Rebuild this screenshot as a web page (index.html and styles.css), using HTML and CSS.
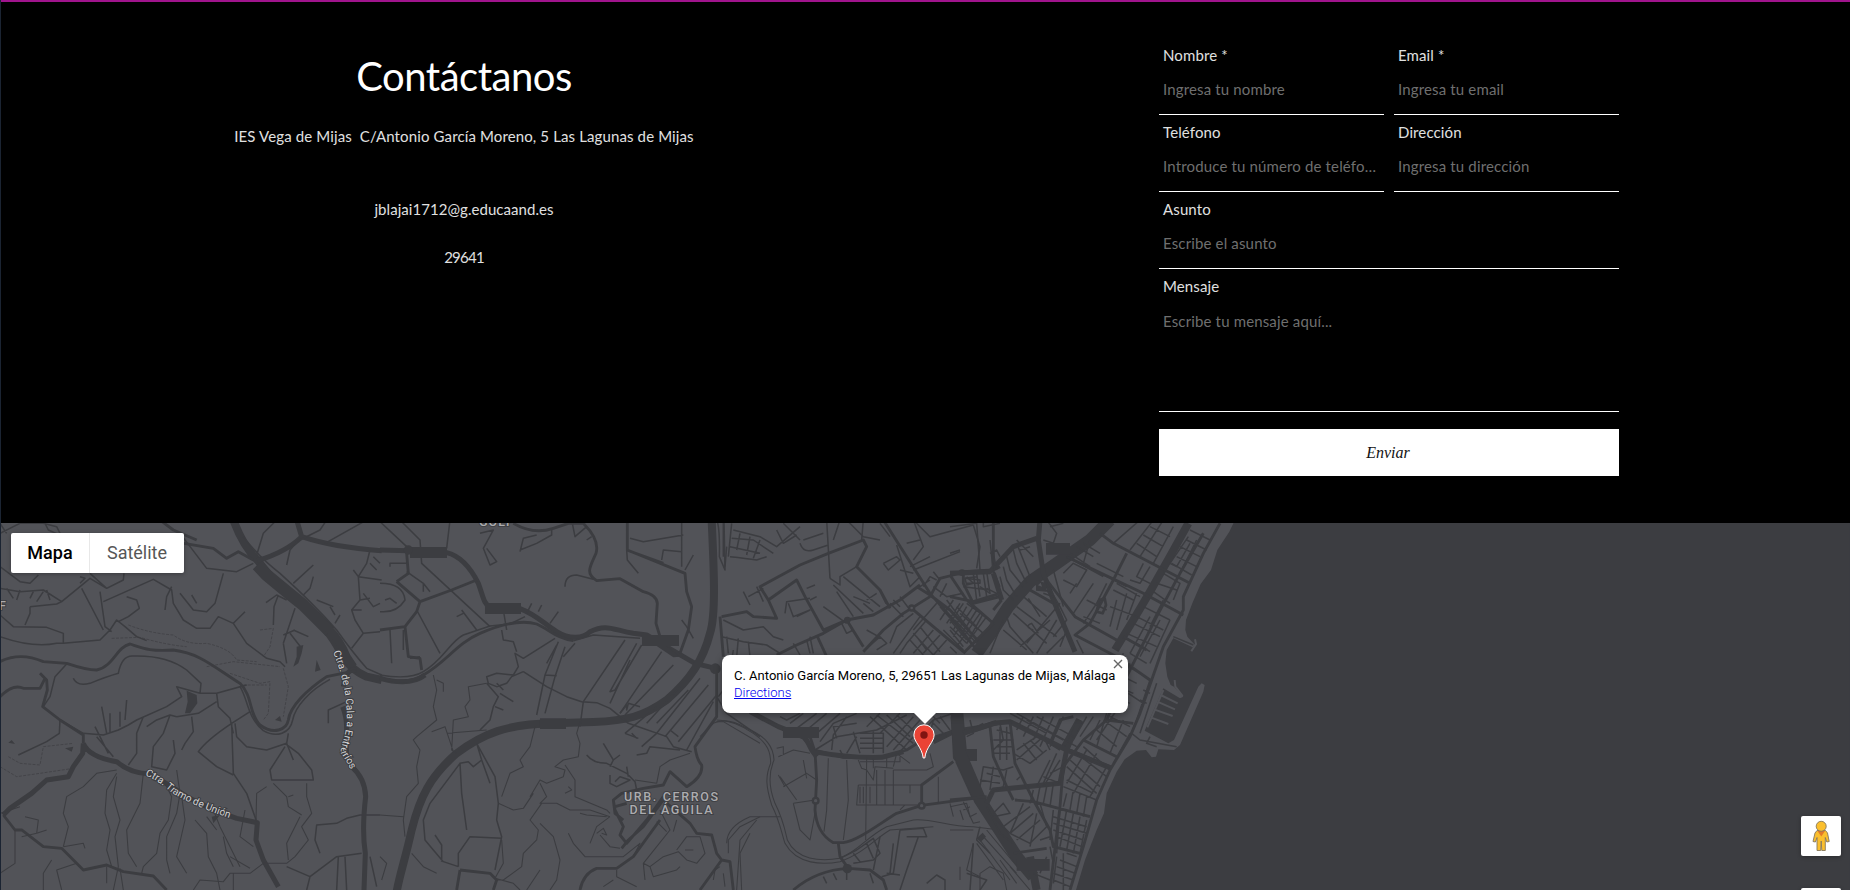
FILE: index.html
```html
<!DOCTYPE html>
<html lang="es">
<head>
<meta charset="utf-8">
<title>Contáctanos</title>
<link rel="stylesheet" href="styles.css">
</head>
<body>
<main class="page">
  <section class="contact">
    <div class="info">
      <h1 class="title">Contáctanos</h1>
      <p class="address">IES Vega de Mijas&nbsp; C/Antonio García Moreno, 5 Las Lagunas de Mijas</p>
      <p class="mail">jblajai1712@g.educaand.es</p>
      <p class="zip">29641</p>
    </div>
    <form class="form">
      <label class="field"><span class="label">Nombre *</span><input class="input" placeholder="Ingresa tu nombre"></label>
      <label class="field"><span class="label">Email *</span><input class="input" placeholder="Ingresa tu email"></label>
      <label class="field"><span class="label">Teléfono</span><input class="input" placeholder="Introduce tu número de teléfono"></label>
      <label class="field"><span class="label">Dirección</span><input class="input" placeholder="Ingresa tu dirección"></label>
      <label class="field wide"><span class="label">Asunto</span><input class="input" placeholder="Escribe el asunto"></label>
      <label class="field wide"><span class="label">Mensaje</span><textarea class="input area" placeholder="Escribe tu mensaje aquí..."></textarea></label>
      <button class="send wide" type="button">Enviar</button>
    </form>
  </section>

  <section class="map">
    <svg class="canvas" viewBox="0 523 1850 367" width="1850" height="367">
      <rect class="land" x="0" y="523" width="1850" height="367"/>

      <!-- sea and harbour -->
      <g transform="translate(950 520) scale(.33333)">
        <path class="sea" d="M855 0L838 35L802 90L783 150L752 192L727 250L708 300L706 330L712 350L735 375L728 382L670 355L650 390L646 430L652 470L662 495L672 500L700 530L690 535L640 505L584 632L655 670L672 660L745 500L755 490L764 495L760 515L690 675L672 690L625 688L618 710L605 712L588 690L560 692L524 718L500 755L470 820L462 880L440 930L405 1020L378 1110H2700V0Z"/>
        <path class="pier" d="M735 358L738 372L724 394M674 480L676 500L698 528M632 525L683 550M622 545L675 568M612 568L668 588M602 592L655 612M640 510L592 622"/>
      </g>

      <!-- west -->
      <g class="road" transform="translate(0 520) scale(.33333)">
        <path class="w1" d="M700 0Q730 80 772 120Q830 200 900 250Q990 330 1020 395Q1050 450 1100 470L1145 480"/>
        <path class="w1 fat" d="M772 135L800 165Q860 215 910 255L990 335"/>
        <path class="w1" d="M985 325Q1020 360 1040 410L1060 440"/>
        <path class="w4" d="M730 50Q780 115 840 160Q940 250 1010 330Q1060 400 1100 445L1145 465"/>
        <path class="w2" d="M772 122Q860 95 905 50L890 0M905 50Q1000 82 1145 92"/>
        <path class="w2" d="M1068 452Q1040 440 1030 500M1055 740Q1095 775 1097 830Q1085 930 1096 1000L1092 1110M1028 560Q1045 600 1038 660L1040 710L1055 740"/>
        <path class="w2" d="M250 670Q265 710 350 725Q390 760 450 762Q500 790 560 830L640 870L710 895L772 908L768 960L790 1020L835 1100M250 670L248 700L220 740L205 770L140 780L95 820L30 865L10 885"/>
        <path class="w3" d="M10 885L45 930L65 930L130 980L185 985L250 1050L320 1035L370 1055L460 1068L500 1110"/>
        <path class="w3" d="M0 425Q60 395 130 425L200 430Q260 450 290 450C340 440 350 380 390 372C430 385 450 395 520 390C600 400 640 440 720 490C760 530 745 580 780 615C820 645 860 630 865 600C870 560 920 510 980 470L1068 452"/>
        <path class="w4" d="M720 500C745 540 740 590 790 632C830 655 870 640 878 600C885 560 930 510 990 478"/>
        <path class="w3" d="M0 530Q40 490 70 505L120 505L135 475M120 460L140 480L142 510L128 560L180 600L250 645V670M552 70L640 85L680 115L715 95L760 120M480 0L520 30L590 60"/>
        <path class="w4" d="M0 40L40 20L60 10L130 10L170 20L190 60M0 140L60 185L90 190L115 165M0 205L60 215L130 210L185 245L240 200L270 175L320 205L370 180L372 160M270 160L320 205M90 260L170 252L185 245M90 260V280L75 315M0 285L40 320L140 322L190 340L190 370L300 360L330 330L350 300L375 320L410 350L440 362M300 215L315 320L335 335M310 245L460 178L515 210L520 250L550 300L590 325L630 325L655 290L700 310L740 370L800 415L840 425L855 440M540 40L620 145L710 155L760 130M0 350Q100 385 170 370L190 370M130 0L145 30L190 50M0 10L20 40M20 205L40 235M60 210L50 240M130 215L110 245M100 215L90 235M140 210L150 240M240 190L255 175L240 170M245 205L310 330"/>
        <path class="w4" d="M540 220L580 270L620 275L645 250L670 160M495 270L500 230L515 200M380 230L410 240L418 265L385 290L355 305M700 310L735 275M575 225L590 250M820 315L822 260L835 225M798 248L830 225L860 240M850 370L885 265M850 370L860 430M850 345L885 330M880 330L925 350M870 340L905 385M860 135L870 90L900 55M880 190L940 135M940 170L930 205L910 225M950 240L1000 260M990 260L1005 285M1020 285L1005 310M770 105L790 40L830 0M900 60L960 30L980 0M975 70L1100 0"/>
        <path class="w4" d="M200 432L165 470L150 530L130 560M220 475Q230 500 270 490Q320 470 355 460Q365 405 400 408Q500 405 560 450L603 490L600 520M600 520L530 500L545 530L500 560L410 600L385 615L355 630L310 645L250 640L180 600L178 640L140 665L55 705M305 560L320 640M330 580L330 640M360 575V620M380 540L375 600M285 620L325 700M290 650L340 710M430 590L410 640L410 700L385 735M440 620L470 600L510 585L530 590M510 585L490 640L460 680L455 740L500 750L525 700L520 660M530 590L595 580L650 545M575 590L580 635L555 670L545 690M650 520L655 560L690 595L700 640M695 610Q620 660 595 695L650 740L700 765M650 520L720 500M600 520L650 520L740 495M750 575L695 610L700 760L740 820L770 905M705 610L710 650L740 680L800 690L860 670L865 640M855 670L895 700L935 750L940 780L880 780M855 680L810 750L815 780L880 780M860 670L880 720"/>
        <path class="w4" d="M1110 90L1100 130L1075 170L1080 240L1055 270L1065 300L1090 340L1140 335M1110 130L1130 150M1090 220L1120 260L1140 250M1140 130L1120 110M1080 240L1110 235M1055 270L1085 270M1060 150L1075 170L1145 180M1055 385L1090 340M985 610L985 570L1040 545M1140 885H1080L1040 895L1010 910L950 915L945 960L960 1000M1085 1000L1010 1010L930 1070M1035 1010L1040 1110M1015 1010L1010 1110M1110 1010L1130 1100M860 1040L930 1070L920 1110"/>
        <path class="w5" d="M350 750L290 760L250 800L200 830L190 880L205 920L190 980M350 760L320 810L315 880L330 930L320 990L335 1040M350 770L340 830L360 900L345 950L355 1040L340 1110M430 760L420 850L380 930L385 1000L410 1040M490 780L515 830L505 900L480 940L470 1000L430 1040L425 1060M530 750L540 820L530 880L500 950V1020L510 1060M545 830L555 900L530 1010L560 1060M585 900L620 940L625 1010L650 1060L660 1110M640 870L660 920L680 960L720 1040M735 870L720 950L760 980M620 890L650 930M820 790L860 830L865 860L905 885M865 830L880 825M800 800L770 820L768 900M900 890L880 930L860 970L865 1020M920 790L920 830L935 880L905 920L925 960L885 1010L860 1030L790 1030"/>
        <path class="w5" d="M0 1060L45 1030V930M0 880L60 860M75 890L115 900L110 940L65 950M110 940L140 930M190 980L250 970L255 985M250 1050L230 1030L170 1050L185 1110M155 1020L130 1060L130 1110M320 1040V1090M360 1045L370 1110M670 950L680 1000L700 1040M690 1010L750 1045M580 1110L600 1080L670 1085L690 1060L750 1060L790 1030M700 1060V1110"/>
        <path class="trail" d="M385 315Q450 340 520 345Q560 375 620 370Q690 385 710 420L770 425M335 355L420 352Q500 375 560 380M620 440L700 425L840 440M690 460L780 490L810 485L805 580L790 600M850 445L865 500L850 590M730 495L800 495M780 330L820 325L810 380L790 410M0 740L50 770L120 760L220 745M25 710L60 730L120 735L130 680L220 670"/>
        <path class="pond" d="M560 512L590 525L592 550L570 580L555 580L563 545ZM890 380L910 375L905 400L895 430L880 440L890 410ZM950 420L962 450L945 455ZM825 600L840 588L845 605ZM195 685L220 680L215 695ZM25 668L35 660L45 672ZM635 890L660 885L640 910Z"/>
      </g>

      <!-- centre -->
      <g class="road" transform="translate(380 520) scale(.33333)">
        <path class="w2 mid" d="M0 90L85 92L200 98C250 110 280 160 295 190C310 230 310 250 330 262L420 266C470 285 490 310 530 335C570 360 610 355 630 335C680 310 700 330 760 340L800 345L850 375L945 430L1010 446"/>
        <path class="w1" d="M995 0C1000 120 1010 280 990 340C970 420 930 480 860 540C790 590 740 602 640 606L520 610C380 612 310 640 230 700C150 770 120 830 95 930C75 1020 60 1060 50 1115"/>
        <path class="w2" d="M0 475Q90 500 135 465"/>
        <path class="w3" d="M0 475Q90 495 130 465C200 425 230 370 300 340C370 310 430 300 470 312C510 330 530 355 580 362"/>
        <path class="w4" d="M0 465Q90 480 130 455C190 420 210 365 250 345L330 318L390 312L435 290M580 362L640 345L780 355"/>
        <path class="w3" d="M400 10Q460 45 520 25L565 10L610 10Q660 60 648 100C630 140 615 160 650 182L720 176L790 215Q830 225 832 250L828 310L840 350M742 0V90L915 160L920 215L935 260L925 330L900 400M740 90L850 130M50 185L85 160L80 100M50 185L120 245L110 275L75 320L0 330M120 245L215 210L290 180M75 320L85 410L120 415L125 450"/>
        <path class="w4" d="M210 0L200 85M300 40L340 30L310 85L330 135L350 125L320 85M420 95L430 55L470 45M515 30V45L470 70L420 90M575 0L585 50L620 20M620 60L635 50M555 200Q555 165 590 165L640 178M740 90L742 120L775 160M750 55L790 65L910 45M905 0V140M845 120L850 90L905 95M940 105L915 150M905 300L920 320L940 355M1030 0L1030 110M1040 80L1035 140M0 5L80 80M60 0L120 60L125 130L330 320M80 155L130 190L150 215M130 190V215M110 270L180 400M30 140V130H80M0 190Q70 190 75 240Q50 280 0 275M15 240L30 235L50 250M30 330L35 430M70 330V390M120 410L90 415M245 270L290 330M230 290L250 280M370 270L380 330M440 280L455 250M475 275L485 255M510 310L535 275"/>
        <path class="w4" d="M535 365L495 465L470 585M555 380L525 470L495 580M495 465L530 467M530 375L500 430M585 370L550 410M735 360L610 545L600 620M770 370L690 515L705 510L785 375M750 420L690 550M845 395L720 580M880 435L735 585M960 475L830 640L785 680M985 495L855 650M1010 525L895 665M1000 545L920 690M900 500L800 610M925 510L830 610M870 630L895 650M830 560L735 640"/>
        <path class="w3" d="M1010 460V590L945 680Q950 720 965 735Q970 770 920 800L870 755L850 795L790 805L725 820L700 840L705 870L730 920L720 945L740 970L800 900L850 830M725 985L745 960L790 920L850 840M850 840L930 910L950 940L995 945L1010 1000L1025 1020L1050 1025L1060 1110M1025 1020L960 1110M600 1110Q610 1060 650 1045L710 1045L760 1010L840 900M240 1050L330 1060L350 1080L340 1110M240 1050L230 1110M700 840L705 880L730 900M705 860L740 850"/>
        <path class="w4" d="M430 455L500 500L560 530L605 545L650 548L690 565L745 610L860 650L880 680L935 695M525 355L430 415L405 400L415 440L400 465L350 460L320 470L325 490L350 500L380 490L395 470L430 455M320 490L355 530L340 560L330 600L300 630M350 490L370 510M360 520L400 545M345 560L370 570M290 670L305 720L330 790M290 670L345 770L355 850L350 900L365 950L345 1050M305 720L280 740L265 725L240 730L245 820L260 930M240 730L150 850L130 900L135 960L160 990L190 1025L235 1040M165 945L185 975V1025M235 1040L235 1000L270 950L365 955M365 330L370 360L400 365L410 395M720 580L740 555L740 570L745 550L780 560M770 705L800 700L810 680L900 690M755 640L770 655M735 640L775 655M620 705Q640 730 680 730L740 760L765 785L770 810M670 670L700 720L690 740M700 720L720 705M740 740L745 770M690 765L690 790L710 800L750 780L720 770L705 785M1060 390L1045 490L1015 530M1010 530L1040 580L1140 650"/>
        <path class="w5" d="M160 465L170 510L160 560L170 600L110 650L100 660L120 690L110 740L115 790L80 830L70 900L75 950M170 480L190 490V515M320 490L265 500L270 540L255 560L265 590L220 600L215 690L230 700M155 635L195 620L205 650L220 695M200 640L320 630M465 620L450 680L420 720L430 740L390 760L365 830M600 605L590 640L600 670L595 710L550 720L525 740L555 750L550 770L500 790L480 780L450 830M555 735L585 780V830L680 870L690 880M480 790L500 830L480 850L530 850L570 870L630 870L690 890M555 820L575 810L565 800M600 880L620 885L680 890M485 850L450 900L475 930L470 960L430 1000L425 1040L370 1080L350 1080M355 850L400 870L430 865L460 820M480 910L520 950L540 1020L530 1080L510 1110M440 1110L480 1050M565 940L580 970L615 1010L730 1010L780 970L760 1010M690 890L650 920L630 970M650 940L670 925L680 945L665 940M660 945L690 980L720 985M840 870L870 930L790 1030L795 1080M830 905L860 935M890 990L920 950L960 950L975 1000L950 1030L920 1020L895 995L850 1010L810 1040L820 1070L890 1050L900 1040M915 990L940 990M890 900L880 935M1000 1080L1005 1050L1020 1040M1030 1060L1035 1100M1140 890L1080 920L1045 960V1000M1110 940L1080 1000L1085 1110M1140 670L1030 605L1010 605M830 790L840 740L870 720L930 700M765 780L830 790M790 1030L810 1040M710 1050V1070L770 1100M700 1080L670 1100M95 1000L130 1040L170 1060M0 885L70 890M0 1010L20 1030L5 1080M365 960L370 1030L345 1075L400 1090L420 1110"/>
        <path class="block" d="M90 81H201V114H90ZM315 249H423V282H315ZM786 345H897V378H786ZM480 595H558V627H480ZM830 378L860 378L900 410L880 412Z"/>
        <circle class="fill" cx="85" cy="90" r="14"/><circle class="fill" cx="1006" cy="446" r="16"/>
      </g>

      <!-- town -->
      <g class="road" transform="translate(700 520) scale(.33333)">
        <path class="w4" d="M50 0Q60 20 58 110L75 150L72 0M95 10L85 110M90 110Q140 115 170 120L200 110M100 30L180 50L230 80L300 20M95 55L160 60L220 100M90 80L180 100M120 40L110 90M150 50L140 105M180 60L160 115M230 30L250 70L290 45M250 10L300 60M300 70Q310 100 340 90L385 75M310 60L370 40M440 0L490 50L540 60M400 60L420 0M490 0L485 60M380 0L390 175M540 10L570 50M550 130L590 110L600 120L565 150L550 130M590 75L630 200L660 170M600 150L640 160M640 0L690 50L820 15M640 0L670 80L640 120M620 70L660 60M640 150L780 95M630 140L690 110M820 15L840 80L830 145M850 0L850 20L900 10"/>
        <path class="w3" d="M65 290L140 275L160 290L230 295L205 240L180 200L300 135L385 100L490 60L500 80L470 140L540 210L570 265M205 240L290 180L315 230L370 330L440 300M60 290L70 410M550 0L620 110L690 220L760 300L830 390M540 210L560 250M650 200L690 225M230 405L290 375L370 340L440 300L520 285L600 240L660 195M690 230L610 280L550 330L490 395M690 230L720 175L760 165L790 155L880 150L900 140M790 155L790 190L820 250L900 230M440 300L490 380M635 265L700 320L790 395M880 0V150M350 345L380 410M690 225L750 270L850 380"/>
        <path class="w4" d="M65 350L130 365L200 375L240 400M70 300L130 330L190 320L220 350L250 360M85 400L80 350M110 410L115 355M150 410L145 365M130 215L150 255M145 230L190 205M170 200L190 245M255 280L260 245L330 235M265 250L280 290L330 270L290 290M320 205L345 195M330 240L350 230M330 350L340 400M320 360L330 400M280 370L300 405M400 195L490 280M410 215L460 290M370 260L440 310M390 175L420 195L420 170L470 140M460 230L510 250M500 240L530 220M430 170L540 260M490 250L520 275M425 310L440 340L460 330M500 330L545 355M570 250L610 290M580 240L600 260M600 230L630 270M530 390L560 370L540 350L500 385M640 280L590 320L570 370M660 290L580 400M680 300L620 370L600 400M640 340L700 405M660 320L720 395M630 360L670 405M700 330L640 400M720 345L670 400M740 360L700 405M650 350L680 390M710 250L640 330M720 260L790 340M740 240L800 320M700 200L740 230L790 220M740 190L720 230M670 200L690 170L710 180M700 155L720 180M690 180L660 200M760 240L720 300M780 250L740 310M800 260L760 330M830 270L780 350M850 280L800 370M800 250L870 300M780 280L850 340M765 300L830 370M750 320L800 370M730 330L790 390M880 150L900 200M830 160L840 230M860 155L870 220L840 200M800 170L820 190L800 195L795 175L830 170"/>
        <circle class="fill" cx="635" cy="264" r="11"/><circle class="fill" cx="786" cy="158" r="10"/><circle class="fill" cx="442" cy="300" r="10"/>
        <circle class="hole" cx="635" cy="264" r="4"/>
        <path class="w2" d="M150 575L235 620L300 645"/>
        <path class="w3" d="M150 575L235 620L310 655L340 690L430 712L545 712L620 690L660 665L770 630L900 610M330 650L345 695L350 780L345 870Q350 940 400 968H430C470 965 540 910 590 880L665 856L820 835M415 970L420 1010L445 1045M280 1110Q350 1050 445 1045L510 1050L550 1080L560 1110M665 855L665 795L760 725M770 725L820 835"/>
        <path class="w2" d="M310 640L335 690L350 710M340 695Q450 715 545 712L610 695M700 665L760 635M820 630L890 608"/>
        <path class="w5" d="M0 650L40 610Q80 590 140 625C200 650 220 680 222 720C205 760 205 800 225 850C250 900 255 930 262 960C290 1020 360 1025 420 1015C480 990 500 950 560 920L640 900C700 895 740 920 820 920L900 930"/>
        <path class="w5" d="M50 600Q100 600 160 640C205 670 212 700 212 730C195 770 198 800 215 855C240 905 245 940 255 970C290 1035 370 1035 420 1025C490 1000 520 960 570 930L700 920M240 890L150 890Q80 920 80 970M110 1110L120 960L170 900M235 710L280 690L330 700M230 685L250 680V705M240 770L290 840M250 800L320 760L350 780M235 765L255 800M320 775L310 720M280 850L345 840M280 850L300 930L330 960L345 880M385 715L380 870L372 935M440 720L445 840L430 960M475 720L485 745L500 750L520 780L525 740L580 745M475 795L470 855H660M475 795H665M480 800V850M490 800V850M510 800V850M530 750V855M555 750V855M580 750V855M630 795V820M500 710L497 960M600 870L615 855M580 750H680L700 740L690 700M715 770V850M750 850L760 890M790 845L820 910L840 905M790 870L810 860M480 725H600L600 710M520 715V745M560 712V745M580 740L590 700L630 730"/>
        <path class="w4" d="M345 690L410 650L530 630L620 585M240 590L260 600L300 580M270 610L310 580M290 625L350 580M320 630L380 580M350 640L420 580M360 665L400 610L470 580M395 690L400 645L440 590M410 655L400 620L470 610M460 635L480 700M480 640H550V700M480 655H550M480 670H550M480 685H550M520 630V700M440 700L470 650M430 710L420 690M510 590L620 690M530 585L640 670M560 585L630 650M590 585L650 640M560 680L640 590M580 690L660 600M600 695L640 650M540 640L600 580M500 620L540 580M690 640L700 600L760 580M700 610L740 650M720 590L750 630M690 580L720 610M660 640L700 600"/>
        <path class="w4" d="M420 1015L470 990L520 955L540 1000L520 1020L460 1030M500 970L520 1015M460 1000L480 1025M540 950L520 1050M600 930L580 1060L545 1070M600 930L670 925L680 950L620 950M655 950L620 1050L600 1110M580 970L570 1060M560 1060L600 1065M440 1050V1080M400 1060L410 1080M370 1070L380 1090M510 1060L520 1090M680 1090L710 1065L735 1080V1110M820 970L810 1110M800 1060L860 1080L840 1110M840 920L830 960L870 1000"/>
        <circle class="fill" cx="347" cy="842" r="12"/><circle class="hole" cx="347" cy="842" r="5"/><circle class="fill" cx="665" cy="857" r="12"/><circle class="hole" cx="665" cy="857" r="5"/><circle class="fill" cx="442" cy="1046" r="14"/>
        <path class="block" d="M249 621H357V654H249ZM752 580H790L800 687H831V723H805L820 760L800 770L759 715Z"/>
      </g>

      <!-- seafront -->
      <g class="road" transform="translate(950 520) scale(.33333)">
        <path class="w1 fat" d="M480 0L420 60L320 130L240 185L175 260L130 330L80 400M20 590L30 700L90 840L200 1010L250 1070"/>
        <path class="w1" d="M715 10L665 100L600 215L550 300L495 390M390 600L340 690M240 1010L260 1110"/>
        <path class="w2" d="M270 0L265 60L280 160L310 240L375 395M0 160L120 155L190 80L260 55M40 640L130 610L180 605L350 690L390 600M110 850L130 810L330 790L350 690L485 745M130 160L155 240"/>
        <path class="w3" d="M810 10L760 100L700 230L700 270L640 380L570 580L540 650L480 750L440 840L400 980L360 1110M760 40L690 160L620 290L560 410L500 530L470 600L400 660L340 740M450 40L490 70L720 190M530 100L490 180L420 310L375 345L500 410L600 480M290 180L375 290L500 360M350 110L580 220L700 285M0 165L50 240L130 310M0 230L70 245L150 220M130 310L40 400M155 240L130 270M240 210L310 250M180 605L195 730L250 840L300 930L310 980L390 1000M120 620L130 710L170 800L190 840M195 840L250 845L420 890M340 740L330 860L300 1110M0 840L110 830M190 1000L290 985M470 600L550 610M500 410L440 500L400 570M590 390L520 350M360 690L480 740M400 660L500 710M300 670L330 600L370 590"/>
        <path class="w4" d="M570 0L490 70M610 0L540 90M640 0L570 110M670 20L610 130M580 45L640 80M600 20L660 50M560 70L620 110M720 30L780 60M710 60L770 90M690 80L750 110M680 110L740 140M665 130L725 165M740 60L690 160M715 50L660 130L680 140L720 70M640 160L690 190L670 240M620 190L680 210M610 215L660 250M640 240L600 320M580 260L660 300M560 290L640 330M550 310L630 350M530 340L620 380M600 290L540 400M630 300L570 410M660 300L600 430M560 370L600 395M540 400L590 430M520 430L570 460M500 460L560 490M480 490L550 520M470 520L540 550M520 400L480 500M540 430L500 520M380 80L430 110M400 70L450 100M360 100L420 140M420 60L400 130M390 90L370 110M350 110L460 170M410 140L530 200M440 130L520 170M470 190L440 250L400 310M430 190L370 280M380 190L360 220M340 160L370 130L410 150L380 200L340 180M410 240L470 270M400 290L450 310M500 190L570 230M490 210L550 240M480 260L560 290M500 240L480 320M530 220L500 330M560 220L530 300M600 140L570 190L540 180M580 130L560 170L600 190M290 0L320 40L310 70L280 60M300 20L340 10M260 190L300 220M290 190L330 260L350 300L310 350M310 150L340 260"/>
        <path class="w4" d="M0 20L80 10L90 150M0 100L30 90M120 60L130 160M150 110L140 90L120 100M200 70L220 120L240 170M190 90L200 130L230 190M170 110L180 150L220 200M160 140L170 180L200 230M150 170L160 210L190 240M140 150L130 100M200 60L250 110M210 90L240 80M45 175L90 180V190L50 190M40 200L120 210M70 160L80 240M100 160L110 230M110 205L140 220M0 270L60 330M20 260L80 320M0 300L50 360M0 330L40 380M40 250L0 310M70 260L10 350M90 280L20 380M110 290L50 370M0 380L20 400M160 300L120 400M170 290L180 320L250 400M200 260L320 350M190 280L290 370M220 230L290 290M235 235L270 290M250 330Q220 320 245 310L265 340M230 370L330 250M210 380L300 300M280 220L310 230M320 300L260 400M350 340L290 400M380 360L400 400M350 330L330 380M160 330L230 390"/>
        <path class="w4" d="M60 600L70 640L50 650M80 620L100 610M180 580L290 640M150 610L160 660L130 690M140 630L180 640M130 660H190M140 680H190M130 700H180M150 620V720M170 620V720M200 580L380 680M220 590L200 630M250 590L220 650M280 590L250 660M310 590L270 680M340 590L300 680M230 600L340 660M260 590L370 650M200 610L330 690M410 590L370 660M430 590L390 650M450 600L420 660M470 580L440 680M440 630L500 680M460 600L530 650M480 590L540 620M520 600L480 700M500 570L440 660M540 640L490 730M200 690L260 650M190 700L240 730L290 690M200 720L280 650L300 690M220 670L260 720M240 660L280 700M300 720L260 800M320 700L280 790M330 720L280 800M300 760L340 740M280 770L330 790M350 740L440 820M360 720L450 800M380 700L470 770M400 680L480 750M350 780L430 820M440 700L370 820M410 690L350 790M470 740L420 830M340 800L440 840M350 820L340 860M370 810L360 870M390 820L380 880M410 830L400 890"/>
        <path class="w4" d="M190 740L160 750L100 740L90 800M170 750L160 800L120 820M130 740L120 810M90 780L150 790M110 760L150 770M200 780L210 770M270 850L290 920M250 810L240 850M270 800L260 850M290 800L280 850M310 790L300 860M130 880L160 850L180 880L130 890M130 890L160 920L240 860M160 920L180 940L250 880M180 940L240 970L290 920M200 960L270 900M220 850L180 940M260 880L240 980M270 960L300 950M310 870L300 960M330 860L320 1000M350 870L330 980M370 880L350 990M390 890L370 1000M410 900L390 1000M310 890L410 920M310 910L410 940M310 930L400 960M320 950L395 980M300 980L310 1030M320 1010L310 1090M340 1000V1110M350 1000L380 1010M330 1020L380 1040M320 1040L375 1060M310 1060L370 1080M310 1080L360 1100M270 1060L290 1010M250 1060L300 1080M110 860L150 940L190 970M600 480L560 600L545 640L570 660L680 680M620 490L570 640M600 520L580 510M590 550L570 540M600 650L590 670L620 680M535 520L580 550M670 350L730 375"/>
        <path class="w5" d="M80 970L160 1080M90 960L180 1080M100 950L200 1060M110 930L210 1050M0 930L70 930M70 970L50 1050L90 1070M90 1110V1060L120 1040L160 1060L170 1110M30 1040V1080M0 860L50 850L60 890L80 880M30 870L40 900M150 1020L200 1090M180 1040L240 1110"/>
        <path class="block" d="M288 69H360V104H288ZM200 1017H299V1052H200ZM80 955L98 938L108 950L92 966Z"/>
        <path class="ring" d="M448 240L464 235L468 255L458 280L440 275Z"/>
        <path class="tri" d="M258 180L290 190L288 215L258 212Z"/>
        <path class="land" d="M264 196L272 188L276 200Z"/>
      </g>

      <!-- place and road names -->
      <defs>
        <path id="cala" d="M333 652C345 680 347 705 347 722C345 742 337 752 343 756Q348 764 362 790"/>
        <path id="union" d="M145 775Q160 782 172 793Q196 808 245 823"/>
      </defs>
      <text class="roadname"><textPath href="#cala">Ctra. de la Cala a Entrerríos</textPath></text>
      <text class="roadname"><textPath href="#union">Ctra. Tramo de Unión</textPath></text>
      <text class="place" x="671" y="801" text-anchor="middle" textLength="94">URB. CERROS</text>
      <text class="place" x="671" y="814" text-anchor="middle" textLength="83">DEL ÁGUILA</text>
      <text class="place" x="479" y="526" textLength="34">GOLF</text>
      <text class="place" x="-1" y="610">F</text>
    </svg>

    <div class="types"><span class="type on">Mapa</span><span class="type">Satélite</span></div>

    <div class="bubble">
      <p class="place-line">C. Antonio García Moreno, 5, 29651 Las Lagunas de Mijas, Málaga</p>
      <a class="directions" href="#">Directions</a>
      <svg class="close" viewBox="0 0 10 10" width="10" height="10"><path d="M1 1L9 9M9 1L1 9"/></svg>
    </div>
    <svg class="pin" viewBox="0 0 22 35" width="22" height="35"><path class="pin-body" d="M11 .8A10 10 0 0 0 .9 10.9C.9 18 9 23 10.2 34H11.8C13 23 21.1 18 21.1 10.9A10 10 0 0 0 11 .8Z"/><circle class="pin-dot" cx="11" cy="11" r="3.7"/></svg>

    <div class="control">
      <svg viewBox="0 0 18 32" width="18" height="32"><path class="man" d="M5 10.5H13.5L15.5 13L17.2 21.5L14.8 22L13.3 17.5V30.5H9.8L9.2 21L8.7 30.5H5V17.5L3.4 22L1 21.5L3 13Z"/><path class="scarf" d="M5.5 11H13L9.3 16.5Z"/><circle class="man" cx="9.2" cy="6.3" r="5"/></svg>
    </div>
    <div class="control next"></div>
  </section>
</main>
</body>
</html>
```
FILE: styles.css
```css
* { box-sizing: border-box; }
body { margin: 0; background: #000; overflow: hidden; }
.page { width: 1850px; height: 890px; display: flex; flex-direction: column; border-left: 1px solid #1b2432; overflow: hidden; }
.contact { height: 523px; flex: none; display: flex; background: #000; border-top: 2px solid #a0148c; color: #e0e0e0; font-family: Lato, sans-serif; font-size: 15px; }

.info { width: 926px; display: flex; flex-direction: column; align-items: center; padding-top: 49px; }
.info > * { margin: 0; font-weight: 400; white-space: nowrap; line-height: 20px; }
.info .title { font-size: 40px; line-height: 50px; color: #fff; letter-spacing: -.5px; }
.info .address { margin-top: 25px; letter-spacing: .125px; }
.info .mail { margin-top: 53px; letter-spacing: .05px; }
.info .zip { margin-top: 28px; letter-spacing: -.75px; }

.form { margin: 43px 0 0 232px; width: 460px; display: grid; grid-template-columns: 225px 225px; column-gap: 10px; grid-auto-rows: max-content; }
.wide { grid-column: 1 / 3; }
.field { display: flex; flex-direction: column; height: 77px; }
.field:has(.area) { height: 136px; }
.label { padding-left: 4px; line-height: 20px; height: 24px; white-space: nowrap; letter-spacing: .12px; }
.input { flex: 1; min-height: 0; width: 100%; background: transparent; border: 0; border-bottom: 1px solid #fff; border-radius: 0; padding: 0 4px 5px; margin: 0 0 7px; font: 15px Lato, sans-serif; letter-spacing: .15px; color: #fff; resize: none; text-overflow: ellipsis; outline: 0; }
.input::placeholder { color: #6f6f6f; opacity: 1; text-overflow: ellipsis; }
.area { padding-top: 12px; margin-bottom: 0; }
.send { margin-top: 17px; height: 47px; border: 0; background: #fff; color: #111; font: italic 16px "Liberation Serif", serif; padding: 0 2px 0 0; }

.map { position: relative; height: 367px; flex: none; overflow: hidden; font-family: Roboto, sans-serif; }
.canvas { display: block; margin-left: -1px; }
.land { fill: #525358; }
.sea { fill: #3c3d41; }
.pier { fill: none; stroke: #525358; stroke-width: 6; }
.road path { fill: none; stroke: #3c3d41; stroke-linejoin: round; stroke-width: 4; }
.road .w1 { stroke-width: 24; }
.road .fat { stroke-width: 37; }
.road .w2 { stroke-width: 15; }
.road .w3 { stroke-width: 8.5; }
.road .w4 { stroke-width: 4.5; }
.road .w5 { stroke-width: 3.2; }
.road .trail { stroke-width: 2; stroke-dasharray: 9 4; }
.road .block, .road .pond, .road .tri { fill: #3c3d41; stroke: none; }
.road .land { fill: #525358; stroke: none; }
.road .ring { stroke-width: 8; }
.fill { fill: #3c3d41; }
.hole { fill: #525358; }
.roadname { font-size: 10.2px; fill: #d2d2d4; stroke: #3c3d41; stroke-width: 2px; paint-order: stroke; }
.place { font-size: 12.5px; font-weight: 500; fill: #acacaf; stroke: #3f4044; stroke-width: 2px; paint-order: stroke; }

.types { position: absolute; left: 10px; top: 10px; width: 173px; height: 40px; display: flex; background: #fff; border-radius: 2px; box-shadow: 0 1px 4px rgba(0,0,0,.3); font-size: 18px; line-height: 40px; color: #565656; }
.type { flex: 1; text-align: center; }
.type.on { flex: 0 0 79px; color: #000; font-weight: 500; border-right: 1px solid #e8e8e8; }

.bubble { position: absolute; left: 721px; top: 132px; width: 406px; height: 58px; padding: 12px 0 0 12px; background: #fff; border-radius: 8px; box-shadow: 0 2px 7px 1px rgba(0,0,0,.3); font-size: 13px; line-height: 17px; color: #000; }
.bubble::after { content: ""; position: absolute; left: 192px; top: 58px; border: 11.5px solid transparent; border-top-color: #fff; border-bottom: 0; }
.place-line { margin: 0; white-space: nowrap; }
.directions { display: block; width: max-content; color: #0000ee; font-weight: 300; }
.close { position: absolute; right: 5px; top: 4px; fill: none; stroke: #666; stroke-width: 1.4; }
.pin { position: absolute; left: 912px; top: 201px; }
.pin-body { fill: #ea4335; stroke: #fff; stroke-width: 1; }
.pin-dot { fill: #811411; }
.control { position: absolute; left: 1800px; top: 293px; width: 40px; height: 40px; display: flex; align-items: center; justify-content: center; background: #fff; border-radius: 2px; box-shadow: 0 1px 4px rgba(0,0,0,.3); }
.next { top: 365px; }
.man { fill: #fbbf2d; stroke: #84775c; stroke-width: .9; }
.scarf { fill: #e1782a; }
```
